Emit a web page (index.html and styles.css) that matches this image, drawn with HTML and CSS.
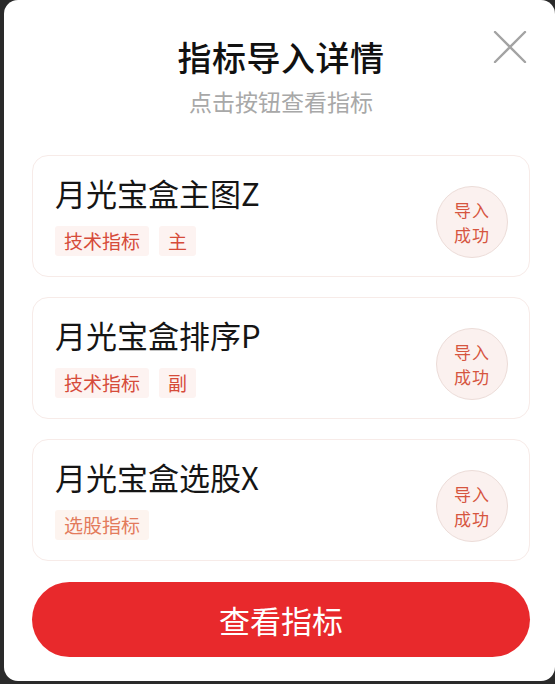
FILE: index.html
```html
<!DOCTYPE html>
<html lang="zh-CN">
<head>
<meta charset="utf-8">
<title>指标导入详情</title>
<link rel="stylesheet" href="styles.css">
</head>
<body>
<div class="modal">
  <button class="close" aria-label="关闭">
    <svg width="34" height="32" viewBox="0 0 34 32"><path d="M2 1 L32 31 M32 1 L2 31" stroke="#a3a3a3" stroke-width="2.4" fill="none" stroke-linecap="round"/></svg>
  </button>
  <div class="header">
    <div class="title">指标导入详情</div>
    <div class="subtitle">点击按钮查看指标</div>
  </div>
  <div class="list">
    <div class="card">
      <div class="info">
        <div class="name">月光宝盒主图Z</div>
        <div class="tags"><span class="tag">技术指标</span><span class="tag">主</span></div>
      </div>
      <div class="status"><span>导入</span><span>成功</span></div>
    </div>
    <div class="card">
      <div class="info">
        <div class="name">月光宝盒排序P</div>
        <div class="tags"><span class="tag">技术指标</span><span class="tag">副</span></div>
      </div>
      <div class="status"><span>导入</span><span>成功</span></div>
    </div>
    <div class="card">
      <div class="info">
        <div class="name">月光宝盒选股X</div>
        <div class="tags"><span class="tag tag-alt">选股指标</span></div>
      </div>
      <div class="status"><span>导入</span><span>成功</span></div>
    </div>
  </div>
  <button class="action">查看指标</button>
</div>
</body>
</html>
```

FILE: styles.css
```css
html, body {
  margin: 0;
  padding: 0;
  background: #2a2a2a;
  overflow: hidden;
}
body {
  font-family: "Noto Sans CJK SC", "Noto Sans", sans-serif;
}
.modal {
  position: relative;
  box-sizing: border-box;
  margin-left: 4px;
  width: 551px;
  height: 681px;
  background: #fff;
  border-radius: 14px;
  padding: 37px 25px 0 28px;
}
.close {
  position: absolute;
  left: 489px;
  top: 31px;
  padding: 0;
  margin: 0;
  border: 0;
  background: none;
  width: 34px;
  height: 32px;
}
.close svg { display: block; }
.header {
  text-align: center;
}
.title {
  font-size: 34px;
  line-height: 40px;
  font-weight: 500;
  color: #111;
  letter-spacing: 0.5px;
}
.subtitle {
  margin-top: 10px;
  font-size: 23px;
  line-height: 28px;
  color: #a8a8a8;
}
.list {
  margin-top: 40px;
  display: flex;
  flex-direction: column;
  gap: 20px;
}
.card {
  box-sizing: border-box;
  height: 122px;
  border: 1px solid #f7ebe8;
  border-radius: 16px;
  padding: 19px 22px 20px 22px;
  display: flex;
  justify-content: space-between;
  align-items: flex-start;
}
.name {
  font-size: 31px;
  line-height: 36px;
  color: #151515;
}
.tags {
  margin-top: 15px;
  display: flex;
  gap: 10px;
}
.tag {
  font-size: 19px;
  line-height: 30px;
  padding: 0 9px;
  background: #fdf3f1;
  color: #d64b3a;
  border-radius: 3px;
}
.tag-alt {
  color: #e37b5c;
  background: #fdf4ef;
}
.status {
  box-sizing: border-box;
  width: 72px;
  height: 72px;
  margin-top: 11px;
  margin-right: -1px;
  border-radius: 50%;
  background: #fbf1ef;
  border: 1px solid #ecdcd8;
  color: #d6553f;
  font-size: 17px;
  line-height: 25px;
  display: flex;
  flex-direction: column;
  align-items: center;
  justify-content: center;
  text-align: center;
  letter-spacing: 1px;
}
.action {
  display: block;
  margin-top: 21px;
  width: 498px;
  height: 75px;
  border: 0;
  border-radius: 38px;
  background: #e8292c;
  color: #fff;
  font-family: "Noto Sans CJK SC", "Noto Sans", sans-serif;
  font-size: 31px;
  line-height: 75px;
  padding: 0;
}
```
